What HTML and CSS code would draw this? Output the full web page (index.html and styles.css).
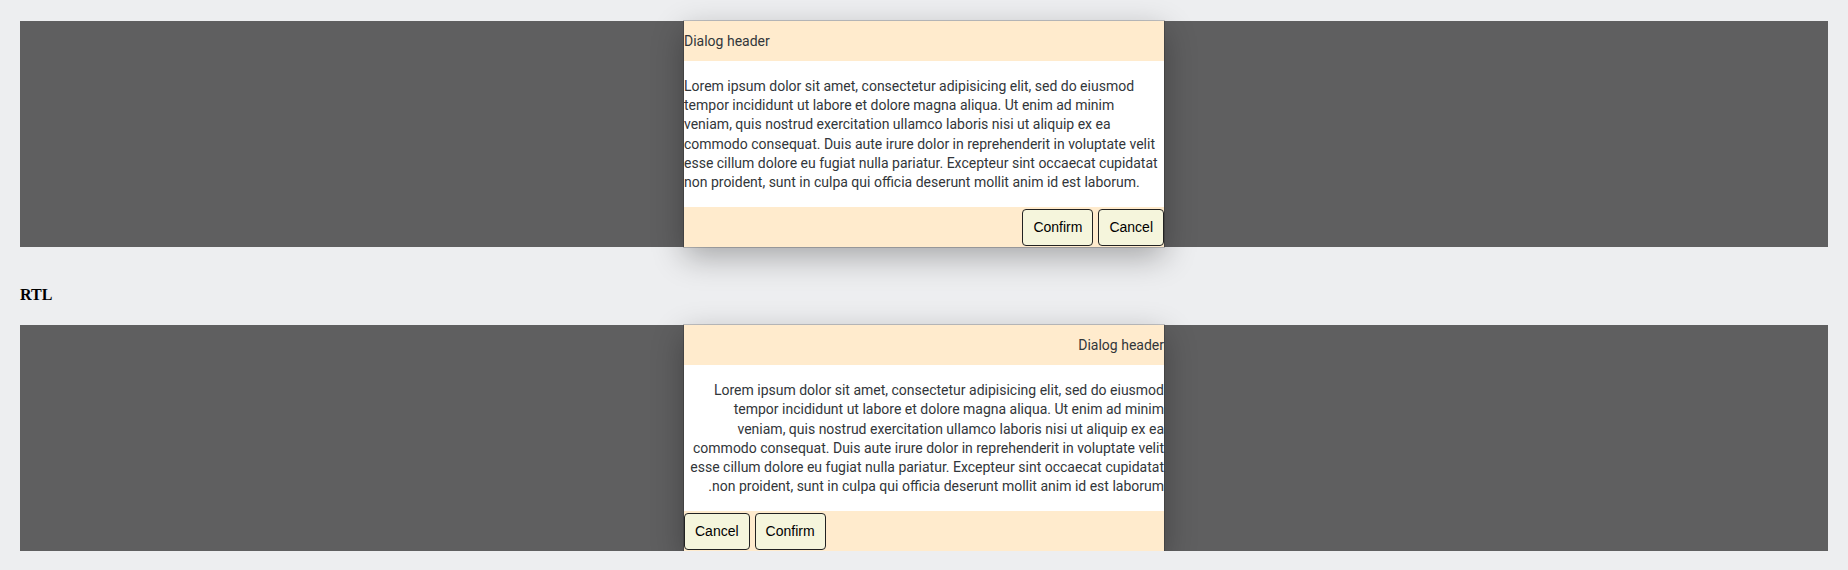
FILE: index.html
```html
<!DOCTYPE html>
<html lang="en">
<head>
<meta charset="utf-8">
<title>Dialog</title>
<link rel="stylesheet" href="styles.css">
</head>
<body>
<main class="page">
  <section class="stage">
    <div class="dialog" role="dialog">
      <header class="dialog-header">Dialog header</header>
      <div class="dialog-body">Lorem ipsum dolor sit amet, consectetur adipisicing elit, sed do eiusmod tempor incididunt ut labore et dolore magna aliqua. Ut enim ad minim veniam, quis nostrud exercitation ullamco laboris nisi ut aliquip ex ea commodo consequat. Duis aute irure dolor in reprehenderit in voluptate velit esse cillum dolore eu fugiat nulla pariatur. Excepteur sint occaecat cupidatat non proident, sunt in culpa qui officia deserunt mollit anim id est laborum.</div>
      <footer class="dialog-footer">
        <button class="btn">Confirm</button>
        <button class="btn">Cancel</button>
      </footer>
    </div>
  </section>

  <h4 class="section-title">RTL</h4>

  <section class="stage" dir="rtl">
    <div class="dialog" role="dialog">
      <header class="dialog-header">Dialog header</header>
      <div class="dialog-body">Lorem ipsum dolor sit amet, consectetur adipisicing elit, sed do eiusmod tempor incididunt ut labore et dolore magna aliqua. Ut enim ad minim veniam, quis nostrud exercitation ullamco laboris nisi ut aliquip ex ea commodo consequat. Duis aute irure dolor in reprehenderit in voluptate velit esse cillum dolore eu fugiat nulla pariatur. Excepteur sint occaecat cupidatat non proident, sunt in culpa qui officia deserunt mollit anim id est laborum.</div>
      <footer class="dialog-footer">
        <button class="btn">Confirm</button>
        <button class="btn">Cancel</button>
      </footer>
    </div>
  </section>
</main>
</body>
</html>
```
FILE: styles.css
```css
html, body {
  margin: 0;
  padding: 0;
}

body {
  background: #edeef0;
  font-family: "Liberation Serif", serif;
  overflow: hidden;
}

.page {
  padding: 21px 20px 0;
}

.stage {
  display: flex;
  justify-content: center;
  background: #5f5f60;
}

.dialog {
  width: 480px;
  display: flex;
  flex-direction: column;
  background: #fff;
  color: #32363a;
  font-family: Roboto, "Liberation Sans", sans-serif;
  font-size: 14px;
  box-shadow: 0 0 0 1px rgba(0, 0, 0, 0.18), 0 10px 30px rgba(0, 0, 0, 0.3);
}

.dialog-header {
  background: #ffebcd;
  padding: 11px 0;
  line-height: 18px;
}

.dialog-body {
  padding: 16px 0 15px;
  line-height: 19.2px;
}

.dialog-footer {
  display: flex;
  justify-content: flex-end;
  align-items: center;
  gap: 5px;
  height: 40px;
  background: #ffebcd;
}

.btn {
  font-family: "Liberation Sans", Arial, sans-serif;
  font-size: 14px;
  line-height: 17px;
  color: #000;
  background: #f5f5dc;
  border: 1px solid #222;
  border-radius: 4px;
  padding: 9px 10px;
  margin: 0;
}

.section-title {
  margin: 39px 0 21px;
  font-size: 16px;
  line-height: 18px;
  font-weight: bold;
  color: #000;
}
```
